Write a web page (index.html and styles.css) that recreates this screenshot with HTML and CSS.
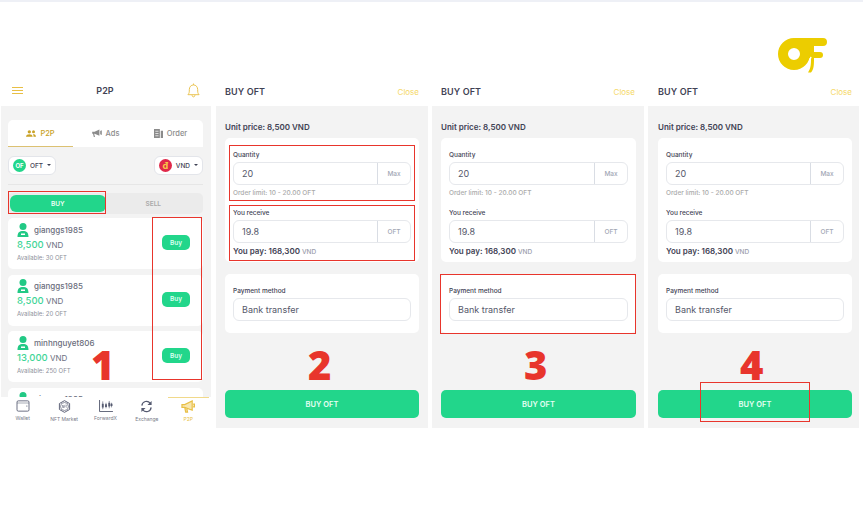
FILE: index.html
```html
<!DOCTYPE html>
<html lang="en">
<head>
    <meta charset="UTF-8">
    <meta name="viewport" content="width=device-width, initial-scale=1.0">
    <title>Buy OFT on P2P</title>
    <link rel="stylesheet" href="styles.css">
</head>
<body>

    <div class="logo-row">
        <svg class="logo" viewBox="0 0 50 36" width="50" height="36">
            <path d="M16 0H45a4 4 0 0 1 0 8H36V14H42a3 3 0 0 1 0 6H36C36 27 36 31 33 34.500H30C33 30 33 26 33 20H27V8z" fill="#eccd00" />
            <circle cx="16" cy="16" r="17.200" fill="none" stroke="#fff" stroke-width="1.400" stroke-dasharray="20 88" stroke-dashoffset="-3" />
            <circle cx="16" cy="16" r="11" fill="none" stroke="#eccd00" stroke-width="10" />
        </svg>
    </div>

    <div class="screens">

        <!-- Step 1: offer list -->
        <section class="screen screen-list">
            <header class="screen-header">
                <span class="burger"><i></i><i></i><i></i></span>
                <h2 class="center-title">P2P</h2>
                <svg class="bell" viewBox="0 0 14 16" width="13" height="15">
                    <path d="M1 12.500C2.500 11 2.500 9.500 2.500 7C2.500 4 4.500 2 7 2C9.500 2 11.500 4 11.500 7C11.500 9.500 11.500 11 13 12.500ZM5.500 13C5.500 15.500 8.500 15.500 8.500 13M7 0.500V2" fill="none" stroke="#e8bf45" stroke-width="1" />
                </svg>
            </header>
            <div class="screen-body list-body">
                <nav class="tabs">
                    <span class="tab tab-active">
                        <svg viewBox="0 0 12 8" width="10" height="7"><circle cx="4" cy="2" r="2" fill="#c9a227" /><circle cx="9" cy="2" r="1.800" fill="#c9a227" /><path d="M0 8C0 4 8 4 8 8zM8.500 4.500C10.500 4.500 12 6 12 8H9C9 6.500 9 5.500 8.500 4.500z" fill="#c9a227" /></svg>
                        P2P
                    </span>
                    <span class="tab">
                        <svg viewBox="0 0 12 10" width="10" height="8"><path d="M0 3.500H3L9 0.500V8.500L3 6H2.500L3.500 10H2L1 6H0zM10 2.500L12 1.500V7.500L10 6.500z" fill="#8b8b8b" /></svg>
                        Ads
                    </span>
                    <span class="tab">
                        <svg viewBox="0 0 10 10" width="9" height="9"><path d="M0 0H6.500V10H0zM7.500 2H10V10H7.500z" fill="#8b8b8b" /><path d="M1.500 2.500H5M1.500 5H5M1.500 7.500H5" stroke="#fff" stroke-width="0.800" /></svg>
                        Order
                    </span>
                </nav>

                <div class="pickers">
                    <span class="picker">
                        <span class="coin coin-oft">OF</span>
                        OFT <i class="caret"></i>
                    </span>
                    <span class="picker">
                        <span class="coin coin-vnd">đ</span>
                        VND <i class="caret"></i>
                    </span>
                </div>

                <div class="switch">
                    <span class="switch-item switch-active">BUY</span>
                    <span class="switch-item">SELL</span>
                </div>

                <article class="offer">
                    <div>
                        <div class="trader">
                            <svg class="avatar" viewBox="0 0 12 14" width="12" height="14"><circle cx="6" cy="3.500" r="3.500" /><path d="M0.500 14C0.500 9.500 2.500 8 6 8C9.500 8 11.500 9.500 11.500 14zM4 10.500V12H8V10.500z" fill-rule="evenodd" /></svg>
                            gianggs1985
                        </div>
                        <p class="rate"><b>8,500</b> VND</p>
                        <p class="available">Available: 30 OFT</p>
                    </div>
                    <span class="buy-pill">Buy</span>
                </article>

                <article class="offer">
                    <div>
                        <div class="trader">
                            <svg class="avatar" viewBox="0 0 12 14" width="12" height="14"><circle cx="6" cy="3.500" r="3.500" /><path d="M0.500 14C0.500 9.500 2.500 8 6 8C9.500 8 11.500 9.500 11.500 14zM4 10.500V12H8V10.500z" fill-rule="evenodd" /></svg>
                            gianggs1985
                        </div>
                        <p class="rate"><b>8,500</b> VND</p>
                        <p class="available">Available: 20 OFT</p>
                    </div>
                    <span class="buy-pill">Buy</span>
                </article>

                <article class="offer">
                    <div>
                        <div class="trader">
                            <svg class="avatar" viewBox="0 0 12 14" width="12" height="14"><circle cx="6" cy="3.500" r="3.500" /><path d="M0.500 14C0.500 9.500 2.500 8 6 8C9.500 8 11.500 9.500 11.500 14zM4 10.500V12H8V10.500z" fill-rule="evenodd" /></svg>
                            minhnguyet806
                        </div>
                        <p class="rate"><b>13,000</b> VND</p>
                        <p class="available">Available: 250 OFT</p>
                    </div>
                    <span class="buy-pill">Buy</span>
                </article>

                <article class="offer offer-cut">
                    <div class="trader">
                        <svg class="avatar" viewBox="0 0 12 14" width="12" height="14"><circle cx="6" cy="3.500" r="3.500" /><path d="M0.500 14C0.500 9.500 2.500 8 6 8C9.500 8 11.500 9.500 11.500 14zM4 10.500V12H8V10.500z" fill-rule="evenodd" /></svg>
                        gianggs1985
                    </div>
                </article>

                <footer class="bottom-nav">
                    <span class="nav-item">
                        <svg viewBox="0 0 16 14" width="14" height="12"><rect x="1" y="1" width="14" height="12" rx="1.500" fill="none" stroke="#555a70" stroke-width="1" /><path d="M1 3.500H15" stroke="#555a70" stroke-width="0.600" /><circle cx="12.500" cy="7" r="0.700" fill="#555a70" /></svg>
                        Wallet
                    </span>
                    <span class="nav-item">
                        <svg viewBox="0 0 14 14" width="13" height="13"><path d="M7 0.700L12.500 3.800V10.200L7 13.300L1.500 10.200V3.800z" fill="none" stroke="#555a70" stroke-width="1" /><circle cx="7" cy="7" r="4.300" fill="none" stroke="#555a70" stroke-width="0.700" /><path d="M4.800 8.500V5.500L6 8.500V5.500M7.200 8.500V5.500H8.400M7.200 7H8.200M8.700 5.500H10M9.400 5.500V8.500" fill="none" stroke="#555a70" stroke-width="0.450" /></svg>
                        NFT Market
                    </span>
                    <span class="nav-item">
                        <svg viewBox="0 0 15 13" width="14" height="12"><path d="M0.500 0V12.500H15" fill="none" stroke="#555a70" stroke-width="1" /><path d="M4 1.500V10M7.500 3V9M11 1V9M13.500 3V8" stroke="#555a70" stroke-width="0.700" /><path d="M4 4V8M7.500 4.500V7.500M11 3V7M13.500 4V6.500" stroke="#555a70" stroke-width="2" /></svg>
                        ForwardX
                    </span>
                    <span class="nav-item">
                        <svg viewBox="0 0 14 14" width="13" height="13"><path d="M2 6A5 5 0 0 1 11 3.500M12 8A5 5 0 0 1 3 10.500" fill="none" stroke="#555a70" stroke-width="1.300" /><path d="M12.500 1V5.500H8zM1.500 13V8.500H6z" fill="#555a70" /></svg>
                        Exchange
                    </span>
                    <span class="nav-item nav-active">
                        <svg viewBox="0 0 15 14" width="14" height="13"><path d="M1 5H4L12 1V11L4 8H1zM4 8L5 13H7L6 8.500M13 4.500H14.500V7.500H13" fill="#f8e7b0" stroke="#e8bf45" stroke-width="1.300" /></svg>
                        P2P
                    </span>
                </footer>
            </div>

            <div class="mark mark-buy"></div>
            <div class="mark mark-pills"></div>
            <div class="step step-1">1</div>
        </section>

        <!-- Step 2: amounts -->
        <section class="screen screen-form screen-two">
            <header class="screen-header">
                <h2>BUY OFT</h2>
                <a class="close">Close</a>
            </header>
            <div class="screen-body form-body">
                <p class="unit-price">Unit price: 8,500 VND</p>
                <div class="form-card amounts">
                    <label>Quantity</label>
                    <div class="field"><span class="value">20</span><span class="addon">Max</span></div>
                    <p class="limit">Order limit: 10 - 20.00 OFT</p>
                    <label class="label-second">You receive</label>
                    <div class="field"><span class="value">19.8</span><span class="addon">OFT</span></div>
                    <p class="pay">You pay: 168,300 <small>VND</small></p>
                </div>
                <div class="form-card method">
                    <label>Payment method</label>
                    <div class="field"><span class="value">Bank transfer</span></div>
                </div>
                <button class="buy-button">BUY OFT</button>
            </div>
            <div class="mark mark-quantity"></div>
            <div class="mark mark-receive"></div>
            <div class="step step-form">2</div>
        </section>

        <!-- Step 3: payment method -->
        <section class="screen screen-form screen-three">
            <header class="screen-header">
                <h2>BUY OFT</h2>
                <a class="close">Close</a>
            </header>
            <div class="screen-body form-body">
                <p class="unit-price">Unit price: 8,500 VND</p>
                <div class="form-card amounts">
                    <label>Quantity</label>
                    <div class="field"><span class="value">20</span><span class="addon">Max</span></div>
                    <p class="limit">Order limit: 10 - 20.00 OFT</p>
                    <label class="label-second">You receive</label>
                    <div class="field"><span class="value">19.8</span><span class="addon">OFT</span></div>
                    <p class="pay">You pay: 168,300 <small>VND</small></p>
                </div>
                <div class="form-card method">
                    <label>Payment method</label>
                    <div class="field"><span class="value">Bank transfer</span></div>
                </div>
                <button class="buy-button">BUY OFT</button>
            </div>
            <div class="mark mark-method"></div>
            <div class="step step-form">3</div>
        </section>

        <!-- Step 4: confirm -->
        <section class="screen screen-form screen-four">
            <header class="screen-header">
                <h2>BUY OFT</h2>
                <a class="close">Close</a>
            </header>
            <div class="screen-body form-body">
                <p class="unit-price">Unit price: 8,500 VND</p>
                <div class="form-card amounts">
                    <label>Quantity</label>
                    <div class="field"><span class="value">20</span><span class="addon">Max</span></div>
                    <p class="limit">Order limit: 10 - 20.00 OFT</p>
                    <label class="label-second">You receive</label>
                    <div class="field"><span class="value">19.8</span><span class="addon">OFT</span></div>
                    <p class="pay">You pay: 168,300 <small>VND</small></p>
                </div>
                <div class="form-card method">
                    <label>Payment method</label>
                    <div class="field"><span class="value">Bank transfer</span></div>
                </div>
                <button class="buy-button">BUY OFT</button>
            </div>
            <div class="mark mark-confirm"></div>
            <div class="step step-form">4</div>
        </section>

    </div>

</body>
</html>
```

FILE: styles.css
```css
/* Global reset */
* {
    margin: 0;
    padding: 0;
    box-sizing: border-box;
}

body {
    font-family: Inter, "Liberation Sans", sans-serif;
    background-color: #fff;
    border-top: 2px solid #eef0f6;
    height: 530px;
    overflow: hidden;
    color: #3f4254;
}

.logo-row {
    height: 73px;
    display: flex;
    justify-content: flex-end;
    align-items: flex-start;
    padding: 36px 35px 0 0;
}

.screens {
    display: flex;
    padding-left: 1px;
}

.screen {
    position: relative;
    height: 353px;
    display: flex;
    flex-direction: column;
}

.screen-list {
    width: 210px;
    margin-right: 5px;
}

.screen-two {
    width: 212px;
    margin-right: 4px;
}

.screen-three {
    width: 212px;
    margin-right: 4px;
}

.screen-four {
    width: 211px;
}

.screen-header {
    height: 31px;
    flex: none;
    display: flex;
    align-items: center;
    justify-content: space-between;
    background-color: #fff;
    padding: 2px 9px 0;
}

.screen-four .screen-header {
    padding: 2px 7px 0 10px;
}

.screen-list .screen-header {
    padding: 2px 11px;
}

.screen-header h2 {
    font-size: 9px;
    font-weight: 600;
    letter-spacing: 0.1px;
}

.close {
    font-size: 8px;
    color: #f5d867;
}

.screen-body {
    flex: 1;
    background-color: #f3f3f3;
}

/* Offer list */
.burger {
    display: flex;
    flex-direction: column;
    gap: 2px;
    width: 11px;
}

.burger i {
    height: 1px;
    background-color: #e8bf45;
}

.list-body {
    position: relative;
    overflow: hidden;
    padding: 14px 8px 0 7px;
}

.tabs {
    display: flex;
    height: 27px;
    background-color: #fff;
    border-radius: 5px 5px 0 0;
}

.tab {
    flex: 1;
    display: flex;
    align-items: center;
    justify-content: center;
    gap: 4px;
    font-size: 7.5px;
    font-weight: 500;
    color: #8b8b8b;
    border-bottom: 1px solid transparent;
}

.tab-active {
    color: #c9a227;
    border-bottom-color: #dcc172;
}

.pickers {
    display: flex;
    justify-content: space-between;
    padding: 9px 0;
    border-bottom: 1px solid #e6e6e6;
    margin-bottom: 8px;
}

.picker {
    height: 19px;
    display: flex;
    align-items: center;
    gap: 4px;
    padding: 0 4px;
    font-size: 6.5px;
    font-weight: 500;
    background-color: #fff;
    border: 1px solid #e3e5ea;
    border-radius: 6px;
}

.coin {
    width: 13px;
    height: 13px;
    border-radius: 50%;
    display: flex;
    align-items: center;
    justify-content: center;
    color: #fff;
    font-size: 6px;
    font-weight: 700;
}

.coin-oft {
    background-color: #22d68b;
}

.coin-vnd {
    background-color: #e0294a;
    color: #f7c948;
    font-size: 9px;
}

.caret {
    border-left: 2px solid transparent;
    border-right: 2px solid transparent;
    border-top: 2px solid #3f4254;
    margin-bottom: 2px;
}

.switch {
    display: flex;
    height: 21px;
    padding: 2px;
    background-color: #ebebeb;
    border-radius: 5px;
    margin-bottom: 4px;
}

.switch-item {
    flex: 1;
    display: flex;
    align-items: center;
    justify-content: center;
    font-size: 6.5px;
    font-weight: 600;
    color: #a9a9a9;
    border-radius: 6px;
}

.switch-active {
    color: #eafff5;
    background-color: #22d68b;
}

.offer {
    height: 51px;
    display: flex;
    justify-content: space-between;
    align-items: center;
    background-color: #fff;
    border-radius: 5px;
    margin-bottom: 5.500px;
    padding: 0 13px 4px 9px;
}

.offer-cut {
    align-items: flex-start;
    padding-top: 4px;
}

.trader {
    display: flex;
    align-items: center;
    gap: 5px;
    font-size: 8px;
    font-weight: 500;
    color: #6a6d7c;
}

.avatar {
    fill: #22c985;
}

.rate {
    font-size: 8px;
    color: #6b6e7e;
    margin-top: 2px;
}

.rate b {
    font-size: 9.500px;
    font-weight: 500;
    color: #3fd597;
}

.available {
    font-size: 6px;
    color: #8d8f9a;
    margin-top: 4px;
}

.buy-pill {
    width: 28px;
    height: 15px;
    margin-top: 2px;
    display: flex;
    align-items: center;
    justify-content: center;
    font-size: 6.500px;
    font-weight: 600;
    color: #d9fff0;
    background-color: #22d68b;
    border-radius: 5px;
}

.bottom-nav {
    position: absolute;
    left: 0;
    right: 0;
    bottom: 0;
    height: 31px;
    display: flex;
    background-color: #fff;
    padding: 3px 2px 0 1px;
}

.nav-item {
    flex: 1;
    display: flex;
    flex-direction: column;
    align-items: center;
    gap: 3px;
    font-size: 5px;
    color: #777a88;
}

.nav-active {
    color: #e8bf45;
    border-top: 1px solid #f1d98a;
    margin-top: -3px;
    padding-top: 2px;
}

/* Buy form */
.form-body {
    display: flex;
    flex-direction: column;
    padding: 16px 9px 10px;
}

.screen-three .form-body {
    padding-right: 8px;
}

.screen-four .form-body {
    padding: 16px 7px 10px 10px;
}

.unit-price {
    font-size: 8px;
    font-weight: 600;
    height: 16px;
}

.form-card {
    background-color: #fff;
    border-radius: 5px;
    padding: 0 8px;
}

.amounts {
    height: 124px;
    padding-top: 13px;
    margin-bottom: 12px;
}

.method {
    height: 59px;
    padding-top: 13px;
}

.form-card label {
    display: block;
    font-size: 6.500px;
    font-weight: 500;
    height: 11px;
}

.form-card .label-second {
    margin-top: 11px;
}

.field {
    height: 23px;
    display: flex;
    justify-content: space-between;
    border: 1px solid #e6e8ec;
    border-radius: 6px;
    font-size: 9px;
    color: #55586a;
}

.value {
    display: flex;
    align-items: center;
    padding-left: 8px;
}

.addon {
    width: 33px;
    display: flex;
    align-items: center;
    justify-content: center;
    font-size: 6.500px;
    font-weight: 500;
    color: #a2a7b5;
    border-left: 1px solid #d9dde4;
}

.limit {
    font-size: 6.500px;
    font-weight: 500;
    color: #aaaaaa;
    margin-top: 4px;
    height: 9px;
}

.pay {
    font-size: 8px;
    font-weight: 600;
    margin-top: 3px;
}

.pay small {
    font-size: 6.500px;
    font-weight: 500;
    color: #9a9dab;
}

.buy-button {
    margin-top: auto;
    height: 28px;
    border: none;
    border-radius: 5px;
    background-color: #22d68b;
    color: #e6fff4;
    font-family: inherit;
    font-size: 7.500px;
    font-weight: 600;
}

/* Tutorial markers over the screenshots */
.mark {
    position: absolute;
    border: 1.500px solid #e8352c;
}

.mark-buy {
    left: 7px;
    top: 116px;
    width: 98px;
    height: 23px;
}

.mark-pills {
    left: 151px;
    top: 142px;
    width: 50px;
    height: 163px;
}

.mark-quantity {
    left: 13px;
    top: 70px;
    width: 186px;
    height: 56px;
}

.mark-receive {
    left: 13px;
    top: 130px;
    width: 186px;
    height: 56px;
}

.mark-method {
    left: 8px;
    top: 199px;
    width: 196px;
    height: 60px;
}

.mark-confirm {
    left: 52px;
    top: 307px;
    width: 110px;
    height: 40px;
}

.step {
    position: absolute;
    top: 270px;
    font-family: "Open Sans", "Liberation Sans", sans-serif;
    font-size: 40px;
    font-weight: 800;
    line-height: 40px;
    color: #e8352c;
}

.step-1 {
    left: 90px;
}

.step-form {
    left: 92px;
}
```
